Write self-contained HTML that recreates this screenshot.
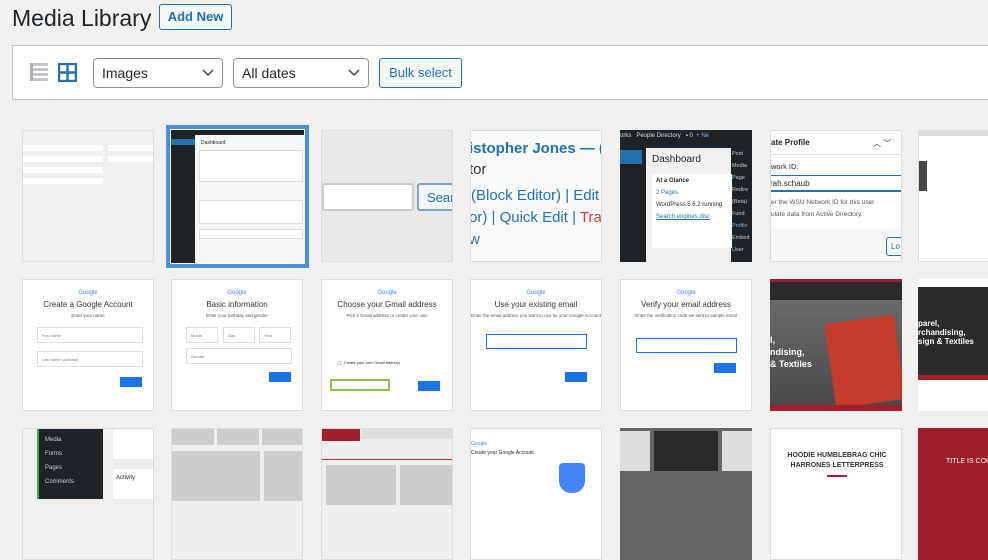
<!DOCTYPE html>
<html><head><meta charset="utf-8"><style>
*{box-sizing:border-box;margin:0;padding:0}
body{width:988px;height:491px;overflow:hidden;background:#f0f0f1;font-family:"Liberation Sans",Arial,sans-serif;color:#1d2327;position:relative}
.a{position:absolute}
h1{position:absolute;left:12px;top:5px;font-size:23px;font-weight:400;color:#1d2327}
.addnew{left:159px;top:4px;width:73px;height:26px;border:1px solid #2271b1;border-radius:3px;color:#2271b1;font-size:13px;line-height:24px;text-align:center;background:#f6f7f7;font-weight:600}
.bar{left:12px;top:45px;width:990px;height:55px;background:#fff;border:1px solid #c3c4c7}
.sel{height:30px;border:1px solid #8c8f94;border-radius:4px;background:#fff;font-size:14px;line-height:28px;padding-left:8px;top:58px}
.sel svg{position:absolute;right:8px;top:10px}
.bulk{left:379px;top:58px;width:83px;height:30px;border:1px solid #2271b1;border-radius:3px;background:#f6f7f7;color:#2271b1;font-size:13px;line-height:28px;text-align:center}
.t{position:absolute;width:132px;height:132px;overflow:hidden;background:#fff;border:1px solid #dcdcde}
.g{font-size:6px;text-align:center;color:#4285f4;margin-top:10px}
.gh{font-size:8px;text-align:center;color:#333;margin-top:4px}
.gs{font-size:4.5px;text-align:center;color:#555;margin-top:4px}
.in{position:absolute;border:1px solid #ddd;height:16px;font-size:4px;color:#777;padding:5px 4px}
.nb{position:absolute;background:#1a73e8;width:22px;height:10px}
</style></head><body>
<h1>Media Library</h1>
<div class="a addnew">Add New</div>
<div class="a bar"></div>
<svg class="a" style="left:30px;top:63px" width="18" height="18"><g fill="#c3c4c7"><rect x="0" y="0" width="18" height="3"/><rect x="0" y="5" width="18" height="3"/><rect x="0" y="10" width="18" height="3"/><rect x="0" y="15" width="18" height="3"/></g><rect x="0" y="0" width="3" height="18" fill="#b0b0b3"/></svg>
<svg class="a" style="left:58px;top:63px" width="19" height="19"><rect x="1" y="1" width="17" height="17" fill="none" stroke="#2271b1" stroke-width="2.4"/><path d="M9.5 1V18M1 9.5H18" stroke="#2271b1" stroke-width="2.4"/></svg>
<div class="a sel" style="left:93px;width:130px">Images<svg width="12" height="8"><path d="M1 1L6 6L11 1" stroke="#50575e" stroke-width="1.6" fill="none"/></svg></div>
<div class="a sel" style="left:233px;width:136px">All dates<svg width="12" height="8"><path d="M1 1L6 6L11 1" stroke="#50575e" stroke-width="1.6" fill="none"/></svg></div>
<div class="a bulk">Bulk select</div>

<!-- row 1 -->
<div class="t" style="left:22px;top:130px;background:#f0f0f1">
 <div class="a" style="left:0;top:14px;width:80px;height:6px;background:#fff"></div><div class="a" style="left:85px;top:14px;width:47px;height:6px;background:#fff"></div>
 <div class="a" style="left:0;top:25px;width:80px;height:6px;background:#fff"></div><div class="a" style="left:85px;top:25px;width:47px;height:6px;background:#fff"></div>
 <div class="a" style="left:0;top:36px;width:80px;height:6px;background:#fff"></div><div class="a" style="left:0;top:47px;width:80px;height:6px;background:#fff"></div>
</div>
<div class="a" style="left:166px;top:125px;width:143px;height:143px;border:4px solid #4a90d9;background:#fff"></div>
<div class="t" style="left:171px;top:130px;border:none;width:133px;height:133px;background:#f6f7f7">
 <div class="a" style="left:0;top:0;width:133px;height:5px;background:#1d2327"></div>
 <div class="a" style="left:0;top:5px;width:24px;height:128px;background:#1d2327"></div>
 <div class="a" style="left:0;top:9px;width:24px;height:6px;background:#2271b1"></div>
 <div class="a" style="left:30px;top:10px;font-size:5px">Dashboard</div>
 <div class="a" style="left:28px;top:20px;width:104px;height:32px;background:#fff;border:1px solid #ddd"></div>
 <div class="a" style="left:28px;top:70px;width:104px;height:24px;background:#fff;border:1px solid #ddd"></div>
 <div class="a" style="left:28px;top:99px;width:104px;height:10px;background:#fff;border:1px solid #ddd"></div>
</div>
<div class="t" style="left:321px;top:130px;background:#e8e8e9">
 <div class="a" style="left:0;top:52px;width:92px;height:28px;background:#fff;border:2px solid #ccc;border-radius:3px"></div>
 <div class="a" style="left:95px;top:52px;width:40px;height:28px;background:#f3f6f8;border:2px solid #7aa7cc;border-radius:3px;color:#2271b1;font-size:13px;padding:5px 8px">Search</div>
</div>
<div class="t" style="left:470px;top:130px;background:#f9f9f9;font-size:15px;color:#2271b1;white-space:nowrap">
 <div class="a" style="left:-2px;top:9px;font-weight:600">istopher Jones — (</div>
 <div class="a" style="left:-2px;top:30px;color:#333">tor</div>
 <div class="a" style="left:0;top:56px">(Block Editor) | Edit</div>
 <div class="a" style="left:-2px;top:78px">or) | Quick Edit | <span style="color:#d63638">Tras</span></div>
 <div class="a" style="left:-2px;top:100px">w</div>
</div>
<div class="t" style="left:620px;top:130px;background:#1d2327;border:none">
 <div class="a" style="left:0;top:20px;width:22px;height:14px;background:#2271b1"></div>
 <div class="a" style="left:26px;top:18px;width:85px;height:114px;background:#f0f0f1"></div>
 <div class="a" style="left:32px;top:24px;font-size:10px">Dashboard</div>
 <div class="a" style="left:32px;top:44px;width:80px;height:74px;background:#fff;font-size:6px;padding:4px"><b>At a Glance</b><br><br><span style="color:#2271b1">2 Pages</span><br><br>WordPress 5.6.2 running<br><br><span style="color:#2271b1;text-decoration:underline">Search engines disc</span></div>
 <div class="a" style="left:112px;top:18px;font-size:5.5px;color:#ccc;line-height:12px">Post<br>Media<br>Page<br>Redire<br>(Beta)<br>Fund<br><span style="color:#72aee6">Profile</span><br>Embed<br>User</div>
 <div class="a" style="left:0;top:3px;font-size:6px;color:#ddd;white-space:nowrap">orks &nbsp; People Directory &nbsp; ▪ 0 &nbsp;<span style="color:#72aee6">+ Ne</span></div>
</div>
<div class="t" style="left:770px;top:130px;background:#f6f7f7">
 <div class="a" style="left:0;top:0;width:132px;height:24px;background:#fff;border-bottom:1px solid #ddd;font-size:8px;font-weight:600;padding:7px 0">ate Profile <span style="position:absolute;left:102px;font-weight:400">︿ ﹀</span></div>
 <div class="a" style="left:0;top:24px;width:132px;height:74px;background:#fff"></div>
 <div class="a" style="left:0;top:31px;font-size:7.5px">work ID:</div>
 <div class="a" style="left:-1px;top:44px;width:133px;height:17px;border-top:1px solid #2271b1;border-bottom:2px solid #2271b1;font-size:8px;padding:3px 0">rah.schaub</div>
 <div class="a" style="left:0;top:66px;font-size:6.5px;color:#50575e;white-space:nowrap;line-height:12px">er the WSU Network ID for this user<br>ulate data from Active Directory.</div>
 <div class="a" style="left:115px;top:106px;width:20px;height:19px;border:1px solid #2271b1;border-radius:3px;color:#2271b1;font-size:8px;padding:4px">Lo</div>
</div>
<div class="t" style="left:918px;top:130px;border-right:none">
 <div class="a" style="left:0;top:0;width:80px;height:5px;background:#ddd"></div>
 <div class="a" style="left:0;top:30px;width:8px;height:30px;background:#444"></div>
 <div class="a" style="left:0;top:130px;width:80px;height:3px;background:#333"></div>
</div>

<!-- row 2 -->
<div class="t" style="left:22px;top:279px"><div class="g">Google</div><div class="gh">Create a Google Account</div><div class="gs">Enter your name</div>
 <div class="in" style="left:14px;top:47px;width:106px">First name</div><div class="in" style="left:14px;top:71px;width:106px">Last name (optional)</div><div class="nb" style="left:97px;top:97px"></div></div>
<div class="t" style="left:171px;top:279px"><div class="g">Google</div><div class="gh">Basic information</div><div class="gs">Enter your birthday and gender</div>
 <div class="in" style="left:14px;top:47px;width:32px">Month</div><div class="in" style="left:51px;top:47px;width:32px">Day</div><div class="in" style="left:87px;top:47px;width:32px">Year</div><div class="in" style="left:14px;top:68px;width:106px">Gender</div><div class="nb" style="left:97px;top:92px"></div></div>
<div class="t" style="left:321px;top:279px"><div class="g">Google</div><div class="gh">Choose your Gmail address</div><div class="gs">Pick a Gmail address or create your own</div>
 <div class="a" style="left:15px;top:80px;font-size:4px">◯ &nbsp;Create your own Gmail address</div>
 <div class="a" style="left:8px;top:99px;width:60px;height:12px;border:2px solid #8bc34a"></div><div class="nb" style="left:96px;top:101px"></div></div>
<div class="t" style="left:470px;top:279px"><div class="g">Google</div><div class="gh">Use your existing email</div><div class="gs">Enter the email address you want to use for your Google Account</div>
 <div class="a" style="left:15px;top:54px;width:101px;height:15px;border:1px solid #1a73e8"></div><div class="nb" style="left:94px;top:92px"></div></div>
<div class="t" style="left:620px;top:279px"><div class="g">Google</div><div class="gh">Verify your email address</div><div class="gs">Enter the verification code we sent to sample.email</div>
 <div class="a" style="left:15px;top:58px;width:101px;height:15px;border:1px solid #1a73e8"></div><div class="nb" style="left:93px;top:83px"></div></div>
<div class="t" style="left:770px;top:279px;background:#555;border:none">
 <div class="a" style="left:0;top:0;width:132px;height:3px;background:#981e32"></div>
 <div class="a" style="left:0;top:3px;width:132px;height:18px;background:#2a2a2a"></div>
 <div class="a" style="left:0;top:21px;width:132px;height:105px;background:linear-gradient(#6a6a6a,#4a4a4a)"></div>
 <div class="a" style="left:60px;top:40px;width:70px;height:85px;background:#c43b2c;transform:rotate(-8deg)"></div>
 <div class="a" style="left:0;top:55px;color:#fff;font-size:9px;font-weight:700;line-height:12px">l,<br>ndising,<br>&amp; Textiles</div>
 <div class="a" style="left:0;top:126px;width:132px;height:6px;background:#a31f2f"></div>
</div>
<div class="t" style="left:918px;top:279px;background:#fff;border:none">
 <div class="a" style="left:0;top:8px;width:80px;height:93px;background:#2b2b2b"></div>
 <div class="a" style="left:0;top:40px;color:#fff;font-size:8px;font-weight:700;line-height:9px">parel,<br>rchandising,<br>sign &amp; Textiles</div>
 <div class="a" style="left:0;top:96px;width:80px;height:5px;background:#a31f2f"></div>
</div>

<!-- row 3 -->
<div class="t" style="left:22px;top:428px;background:#f0f0f1"><div class="a" style="left:14px;top:0;width:66px;height:70px;background:#1d2327;border-left:2px solid #4a4;color:#ccc;font-size:6px;line-height:14px;padding:4px 6px">Media<br>Forms<br>Pages<br>Comments</div><div class="a" style="left:90px;top:0;width:42px;height:30px;background:#fff"></div><div class="a" style="left:90px;top:40px;width:42px;height:30px;background:#fff;font-size:6px;padding:6px 3px">Activity</div></div>
<div class="t" style="left:171px;top:428px;background:#eee"><div class="a" style="left:0;top:0;width:42px;height:16px;background:#ccc"></div><div class="a" style="left:45px;top:0;width:42px;height:16px;background:#ccc"></div><div class="a" style="left:90px;top:0;width:42px;height:16px;background:#ccc"></div><div class="a" style="left:0;top:22px;width:88px;height:50px;background:#ccc"></div><div class="a" style="left:92px;top:22px;width:40px;height:50px;background:#ccc"></div></div>
<div class="t" style="left:321px;top:428px;background:#eee"><div class="a" style="left:0;top:0;width:38px;height:12px;background:#a31f2f"></div><div class="a" style="left:40px;top:0;width:92px;height:10px;background:#ddd"></div><div class="a" style="left:0;top:30px;width:132px;height:1px;background:#c33"></div><div class="a" style="left:4px;top:36px;width:70px;height:40px;background:#ccc"></div><div class="a" style="left:78px;top:36px;width:54px;height:40px;background:#ccc"></div></div>
<div class="t" style="left:470px;top:428px"><div class="a" style="left:0;top:12px;font-size:5px;color:#4285f4">Google</div><div class="a" style="left:0;top:21px;font-size:5px">Create your Google Account</div><div class="a" style="left:88px;top:34px;width:26px;height:30px;background:#4285f4;border-radius:4px 4px 12px 12px"></div></div>
<div class="t" style="left:620px;top:428px;background:#666;border:none"><div class="a" style="left:34px;top:3px;width:64px;height:40px;background:#2a2a2a"></div><div class="a" style="left:0;top:3px;width:30px;height:40px;background:#ddd"></div><div class="a" style="left:102px;top:3px;width:30px;height:40px;background:#ddd"></div></div>
<div class="t" style="left:770px;top:428px"><div class="a" style="left:0;top:22px;width:132px;text-align:center;font-size:7px;font-weight:700;line-height:10px;color:#333">HOODIE HUMBLEBRAG CHIC<br>HARRONES LETTERPRESS</div><div class="a" style="left:56px;top:46px;width:20px;height:2px;background:#a31f2f"></div></div>
<div class="t" style="left:918px;top:428px;background:#9c1d2c;border:none"><div class="a" style="left:28px;top:30px;color:#fff;font-size:7px;white-space:nowrap">TITLE IS CORBEL</div></div>
</body></html>
